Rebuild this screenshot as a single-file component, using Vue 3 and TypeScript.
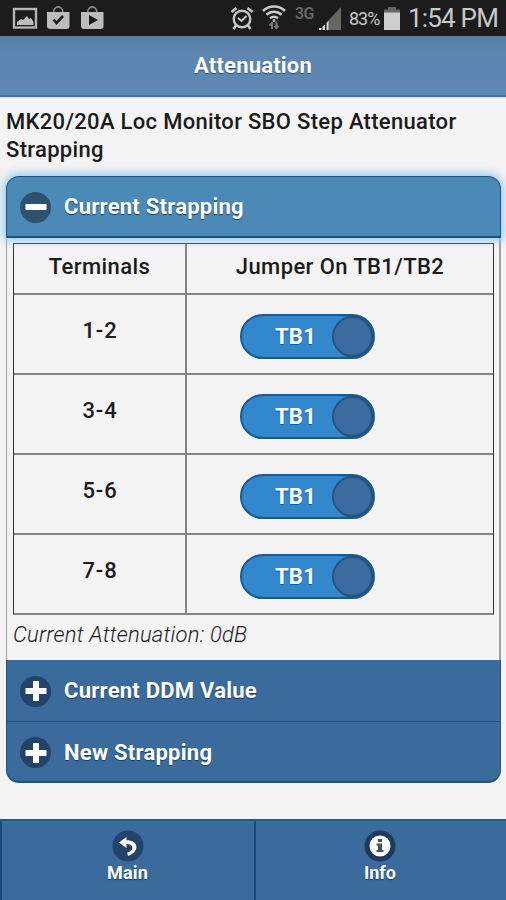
<script setup lang="ts">
import { ref } from 'vue'

interface Row {
  terminals: string
  jumper: string
}

const rows = ref<Row[]>([
  { terminals: '1-2', jumper: 'TB1' },
  { terminals: '3-4', jumper: 'TB1' },
  { terminals: '5-6', jumper: 'TB1' },
  { terminals: '7-8', jumper: 'TB1' },
])

const collapsed: string[] = ['Current DDM Value', 'New Strapping']
</script>

<template>
  <div class="screen">
    <div class="status">
      <svg class="notices" width="110" height="36" viewBox="0 0 110 36">
        <rect x="14" y="9" width="22" height="18.500" fill="none" stroke="#b5b5b5" stroke-width="2.4" />
        <path d="M17 25v-3l4-3 2 1 4-4 2 3 2-1 2.500 4v3z" fill="#bdbdbd" />
        <path d="M53.500 13c0-8 9.500-8 9.500 0" fill="none" stroke="#858585" stroke-width="1.8" />
        <path d="M47 12h22.500v14q0 3-3 3H50q-3 0-3-3z" fill="#bdbdbd" />
        <path d="M53.500 19.500l3 3.500 6.500-7" fill="none" stroke="#1c1c1c" stroke-width="2.600" />
        <path d="M87.500 13c0-8 9.500-8 9.500 0" fill="none" stroke="#858585" stroke-width="1.8" />
        <path d="M81 12h22.500v14q0 3-3 3H84q-3 0-3-3z" fill="#bdbdbd" />
        <path d="M89 15l9 5-9 5z" fill="#1c1c1c" />
      </svg>
      <svg class="alarm" width="24" height="26" viewBox="0 0 24 26" fill="none" stroke="#c6c6c6">
        <circle cx="12" cy="13" r="8.300" stroke-width="2.400" />
        <path d="M1.500 6l5-4M22.500 6l-5-4M6 19.500l-2.500 3.500M18 19.500l2.500 3.500" stroke-width="2.700" />
        <path d="M8 12l3.500 3 5-5" stroke-width="2" />
      </svg>
      <svg class="wifi" width="24" height="26" viewBox="0 0 24 26" fill="none" stroke="#cacaca" stroke-width="2.500">
        <path d="M1 7c6-6 16-6 22 0M4.500 10.700c4.500-4 10.500-4 15 0M8 14.300c2.500-2 5.500-2 8 0" />
        <circle cx="12" cy="16.500" r="1" fill="#cacaca" stroke-width="1" />
        <path d="M10 25v-6M7.500 21.500l2.500-2.500 1 1M14.500 17.500v6.500M12.500 22l2 2 2-2" stroke="#777" stroke-width="2" />
      </svg>
      <span class="net">3G</span>
      <svg class="signal" width="24" height="24" viewBox="0 0 24 24">
        <path d="M9 15L23 0v23H9z" fill="#666" />
        <path d="M1 21h2.500v2H1zM4.500 19.500L7 17.500V23H4.500zM8.500 16l2-2v9h-2z" fill="#d8d8d8" />
      </svg>
      <span class="percent">83%</span>
      <svg class="battery" width="18" height="24" viewBox="0 0 18 24">
        <path d="M5 0h8v2.500h4V7H1V2.500h4z" fill="#666" />
        <path d="M1 5.500h16V23H1z" fill="#cfcfcf" />
      </svg>
      <span class="clock">1:54 PM</span>
    </div>

    <header class="header"><h1>Attenuation</h1></header>

    <main class="content">
      <h2 class="title">MK20/20A Loc Monitor SBO Step Attenuator<br />Strapping</h2>

      <section class="accordion">
        <div class="bar open">
          <span class="disc">
            <svg width="30" height="30" viewBox="0 0 30 30"><path d="M4.500 12h21v6h-21z" fill="#fff" /></svg>
          </span>
          <span class="bar-text">Current Strapping</span>
        </div>
        <div class="body">
          <div class="table">
            <div class="row head">
              <div class="cell">Terminals</div>
              <div class="cell">Jumper On TB1/TB2</div>
            </div>
            <div v-for="row in rows" :key="row.terminals" class="row">
              <div class="cell term">{{ row.terminals }}</div>
              <div class="cell switch-cell">
                <div class="toggle">
                  <span class="toggle-text">{{ row.jumper }}</span>
                  <span class="knob"></span>
                </div>
              </div>
            </div>
          </div>
          <p class="result">Current Attenuation: 0dB</p>
        </div>
        <div v-for="name in collapsed" :key="name" class="bar closed">
          <span class="disc">
            <svg width="30" height="30" viewBox="0 0 30 30"><path d="M12 5h6v7h7.500v6H18v7h-6v-7H4.500v-6H12z" fill="#fff" /></svg>
          </span>
          <span class="bar-text">{{ name }}</span>
        </div>
      </section>
    </main>

    <footer class="footer">
      <div class="tab">
        <svg width="32" height="32" viewBox="0 0 32 32">
          <circle cx="16" cy="16" r="15.500" fill="#23436a" />
          <path d="M7 12.500l7.500-5.500v3.200c12 0 14 11 1.500 15.800l-.8-3.500C23.500 20 21 14 14.500 14v4z" fill="#fff" />
        </svg>
        <span class="tab-text">Main</span>
      </div>
      <div class="tab">
        <svg width="32" height="32" viewBox="0 0 32 32">
          <circle cx="16" cy="16" r="15.500" fill="#1d3b61" />
          <circle cx="16" cy="16" r="10.500" fill="#fff" />
          <path d="M14 9h4v3h-4zM12.500 13.500H18V20h1.500v2h-7v-2H14v-4.500h-1.500z" fill="#41546b" />
        </svg>
        <span class="tab-text">Info</span>
      </div>
    </footer>
  </div>
</template>

<style>
body {
  margin: 0;
  background: #f3f3f3;
}
</style>

<style scoped>
.screen {
  width: 506px;
  height: 900px;
  display: flex;
  flex-direction: column;
  overflow: hidden;
  box-sizing: border-box;
  background: #f3f3f3;
  color: #1b1b1b;
  font-family: Roboto, 'Liberation Sans', sans-serif;
}
.screen * {
  box-sizing: border-box;
}
svg {
  display: block;
  flex: none;
}
.status {
  height: 36px;
  flex: none;
  display: flex;
  background: #1c1c1c;
  color: #c8c8c8;
  white-space: nowrap;
}
.alarm {
  margin: 6px 0 0 120px;
}
.wifi {
  margin: 4px 0 0 8px;
}
.net {
  width: 23px;
  margin: 3px 0 0 9px;
  font-size: 16px;
  line-height: 21px;
  letter-spacing: -0.6px;
  font-weight: 500;
  color: #6c6c6c;
}
.signal {
  margin: 7px 0 0 0;
}
.percent {
  width: 34px;
  margin: 7px 0 0 7px;
  font-size: 18px;
  line-height: 24px;
  letter-spacing: -1px;
}
.battery {
  margin: 7px 0 0 0;
}
.clock {
  margin: 3px 0 0 7px;
  font-size: 26px;
  line-height: 31px;
  letter-spacing: -0.8px;
}
.header {
  height: 61px;
  flex: none;
  border-bottom: 2px solid #3f70a0;
  background: linear-gradient(#577fa8, #5d87b0 35%, #5d88b2);
  box-shadow: 0 1px 1px #cfe0ee;
}
h1 {
  margin: 0;
  padding-top: 16px;
  text-align: center;
  font-size: 22px;
  line-height: 28px;
  font-weight: 700;
  letter-spacing: 0.2px;
  color: #fff;
  text-shadow: 0 1px 1px #264c70;
}
.content {
  flex: 1;
  padding: 11px 4px 0 6px;
}
.title {
  margin: 0 0 12px;
  font-size: 22px;
  line-height: 28px;
  font-weight: 500;
  letter-spacing: 0.31px;
  white-space: nowrap;
}
.accordion {
  width: 495px;
}
.bar {
  display: flex;
  align-items: center;
  padding-left: 13px;
  border: 1px solid #205481;
  color: #fff;
  font-size: 22px;
  font-weight: 700;
  letter-spacing: 0.25px;
  text-shadow: 0 1px 1px #173d63;
}
.open {
  position: relative;
  height: 62px;
  background: #4b89b6;
  border-radius: 13px 13px 0 0;
  border-bottom: 2px solid #175681;
  box-shadow: 0 0 10px 2px #8dc3ea;
}
.closed {
  height: 62px;
  border-top: 0;
  background: #3b6a9d;
}
.closed:last-child {
  height: 61px;
  padding-top: 1px;
  border-bottom: 2px solid #205481;
  border-radius: 0 0 13px 13px;
}
.disc {
  width: 31px;
  height: 31px;
  margin-top: 1px;
  display: flex;
  align-items: center;
  justify-content: center;
  border-radius: 50%;
  background: #23436a;
}
.open .disc {
  background: #2c526f;
}
.bar-text {
  margin-left: 13px;
}
.body {
  height: 422px;
  padding: 5px 6px 0;
  border: solid #a0a0a0;
  border-width: 0 2px 0 1px;
}
.table {
  width: 481px;
  border: 1px solid #333;
  border-bottom: 2px solid #858585;
}
.row {
  display: grid;
  grid-template-columns: 173px 1fr;
  height: 80px;
  border-top: 2px solid #858585;
}
.row.head {
  height: 49px;
  border-top: 0;
}
.cell {
  text-align: center;
  font-size: 22px;
  line-height: 28px;
  font-weight: 500;
  letter-spacing: 0.4px;
  white-space: nowrap;
}
.cell:first-child {
  border-right: 2px solid #858585;
}
.head .cell {
  padding-top: 9px;
}
.cell.term {
  padding: 22px 0 0 1px;
  letter-spacing: 0.9px;
}
.switch-cell {
  padding: 19px 0 0 53px;
}
.toggle {
  width: 135px;
  height: 45px;
  display: flex;
  align-items: center;
  border: 2px solid #1d588a;
  border-radius: 23px;
  background: linear-gradient(90deg, #3188cd 75%, #1c5b91 86%);
}
.toggle-text {
  flex: 1;
  padding-left: 17px;
  color: #fff;
  font-weight: 700;
  letter-spacing: 0.3px;
  text-shadow: 0 1px 1px #1d568a;
}
.knob {
  width: 41px;
  height: 41px;
  border: 2px solid #245581;
  border-radius: 50%;
  background: #3c6b9f;
}
.result {
  margin: 6px 0 0;
  font-size: 22px;
  line-height: 28px;
  font-style: italic;
  font-weight: 300;
  letter-spacing: 0.2px;
}
.footer {
  height: 81px;
  flex: none;
  display: grid;
  grid-template-columns: 254px 252px;
  background: #3b6a9d;
  border-top: 2px solid #205d8d;
}
.tab {
  display: flex;
  flex-direction: column;
  align-items: center;
  padding-top: 9px;
  border-left: 2px solid #174c7a;
  color: #fff;
  font-size: 18px;
  line-height: 22px;
  font-weight: 700;
  text-shadow: 0 1px 1px #173d63;
}
.tab + .tab {
  padding-right: 2px;
}
.tab:first-child .tab-text {
  padding-right: 1px;
  letter-spacing: 0.2px;
}
</style>
